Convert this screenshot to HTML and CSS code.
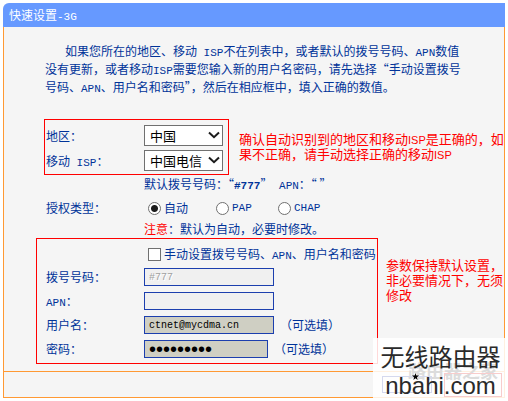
FILE: index.html
```html
<!DOCTYPE html>
<html lang="zh-CN">
<head>
    <meta charset="utf-8">
    <title>快速设置-3G</title>
    <link rel="stylesheet" href="styles.css">
</head>
<body>
    <form class="panel">
        <h1 class="panel-title">快速设置<span class="en">-3G</span></h1>

        <div class="content">
            <p class="intro">如果您所在的地区、移动<span class="en"> ISP</span>不在列表中，或者默认的拨号号码、<span class="en">APN</span>数值没有更新，或者移动<span class="en">ISP</span>需要您输入新的用户名密码，请先选择“手动设置拨号号码、<span class="en">APN</span>、用户名和密码”，然后在相应框中，填入正确的数值。</p>

            <div class="section">
                <div class="group group-isp">
                    <div class="row">
                        <label class="label" for="region">地区：</label>
                        <div class="select">
                            <select id="region"><option>中国</option></select>
                            <svg class="arrow" viewBox="0 0 12 8"><path d="M1 1.5L6 6.2L11 1.5"/></svg>
                        </div>
                    </div>
                    <div class="row">
                        <label class="label" for="isp">移动<span class="en"> ISP</span>：</label>
                        <div class="select">
                            <select id="isp"><option>中国电信</option></select>
                            <svg class="arrow" viewBox="0 0 12 8"><path d="M1 1.5L6 6.2L11 1.5"/></svg>
                        </div>
                    </div>
                </div>
                <p class="note">确认自动识别到的地区和移动<span class="isp">ISP</span>是正确的，如<br>果不正确，请手动选择正确的移动<span class="isp">ISP</span></p>
            </div>

            <div class="plain">
                <div class="hint">默认拨号号码：“<b class="en">#777</b>”<span class="en"> APN</span>：“ ”</div>
                <div class="row auth">
                    <span class="label">授权类型：</span>
                    <label class="radio"><input type="radio" name="auth" checked>自动</label>
                    <label class="radio"><input type="radio" name="auth"><span class="en">PAP</span></label>
                    <label class="radio"><input type="radio" name="auth"><span class="en">CHAP</span></label>
                </div>
                <div class="hint"><span class="warn">注意</span>：默认为自动，必要时修改。</div>
            </div>

            <div class="section">
                <div class="group group-account">
                    <label class="manual"><input type="checkbox"><span>手动设置拨号号码、<span class="en">APN</span>、用户名和密码</span></label>
                    <div class="row">
                        <label class="label" for="dial">拨号号码：</label>
                        <input class="text" id="dial" type="text" value="#777" disabled>
                    </div>
                    <div class="row">
                        <label class="label" for="apn"><span class="en">APN</span>：</label>
                        <input class="text" id="apn" type="text" disabled>
                    </div>
                    <div class="row">
                        <label class="label" for="user">用户名：</label>
                        <input class="text filled" id="user" type="text" value="ctnet@mycdma.cn">
                        <span class="optional">（可选填）</span>
                    </div>
                    <div class="row">
                        <label class="label" for="password">密码：</label>
                        <input class="text filled short" id="password" type="password" value="vnet.mobi">
                        <span class="optional">（可选填）</span>
                    </div>
                </div>
                <p class="note">参数保持默认设置，<br>非必要情况下，无须<br>修改</p>
            </div>
        </div>

        <div class="footer"></div>
    </form>

    <div class="watermark">
        <div class="ghost">路由器之家</div>
        <div class="ghost-button"></div>
        <div class="ghost-mark"></div>
        <div class="brand">无线路由器</div>
        <div class="site">nbahi.com</div>
        <svg class="star" viewBox="0 0 10 10"><path d="M5 0L6.2 3.4L10 3.6L7 5.9L8 10L5 7.6L2 10L3 5.9L0 3.6L3.8 3.4Z"/></svg>
    </div>
</body>
</html>
```
FILE: styles.css
```css
* {
    box-sizing: border-box;
}

body {
    margin: 0;
    padding: 3px;
    background: #fff;
    color: #003399;
    font: 12px/18px "Noto Sans CJK SC", sans-serif;
}

p, h1 {
    margin: 0;
}

.en {
    font-family: "Liberation Mono", monospace;
    font-size: 11px;
    line-height: 1;
    white-space: pre-wrap;
}

.panel {
    background: #f5f5f5;
    border-radius: 6px 0 0 0;
}

.panel-title {
    padding-left: 6px;
    background: #6699ff;
    border-radius: 6px 0 0 0;
    color: #fff;
    font-size: 12px;
    font-weight: normal;
    line-height: 24px;
}

.content {
    padding: 15px 0 7px 32px;
    border: solid #ff9933;
    border-width: 0 1px;
}

.intro {
    margin: 0 40px 23px 9px;
    text-indent: 20px;
}

.section {
    display: flex;
}

.group {
    display: flex;
    flex-direction: column;
    flex: none;
    border: 1px solid #ff0000;
}

.group-isp {
    gap: 4px;
    margin: 0 10px 0 8px;
    padding: 5px 5px 3px 1px;
}

.group-account {
    gap: 6px;
    width: 342px;
    margin-right: 8px;
    padding: 7px 0 5px 9px;
}

.row {
    display: flex;
    align-items: center;
}

.label {
    flex: none;
    width: 98px;
}

.select {
    position: relative;
}

.select select {
    display: block;
    width: 79px;
    height: 21px;
    padding: 0 5px;
    appearance: none;
    background: #fff;
    border: 1px solid #707070;
    border-radius: 0;
    color: #000;
    font: 13px/18px "Noto Sans CJK SC", sans-serif;
}

.arrow {
    position: absolute;
    top: 6px;
    right: 3px;
    width: 12px;
    height: 8px;
    fill: none;
    stroke: #1b1b1b;
    stroke-width: 2;
}

.note {
    padding-top: 12px;
    color: #ff0000;
    font-size: 13px;
    line-height: 15px;
    white-space: nowrap;
}

.group-account + .note {
    padding-top: 19px;
}

.isp {
    font-family: "Liberation Sans", sans-serif;
    font-size: 11px;
    line-height: 1;
}

.plain {
    padding-left: 10px;
}

.hint {
    padding-left: 98px;
}

.auth {
    height: 20px;
    margin: 5px 0 2px;
}

.radio {
    display: flex;
    align-items: center;
    gap: 3px;
    width: 68px;
    padding-left: 4px;
}

.auth .radio:last-child {
    margin-left: -6px;
}

input[type="radio"],
input[type="checkbox"] {
    flex: none;
    appearance: none;
    width: 13px;
    height: 13px;
    margin: 0;
    background: #fff;
    border: 1px solid #707070;
}

input[type="radio"] {
    border-radius: 50%;
}

input[type="radio"]:checked {
    background: radial-gradient(circle, #1b1b1b 3px, #fff 4px);
}

.warn {
    color: #ff0000;
}

.manual {
    display: flex;
    align-items: center;
    gap: 3px;
    height: 16px;
    padding-left: 102px;
    white-space: nowrap;
}

.row .text {
    width: 130px;
    height: 18px;
    padding: 0 4px;
    background: #f0f0f0;
    border: 1px solid #1c3fae;
    color: #000;
    font: 10px "Liberation Mono", monospace;
}

.row .text:disabled {
    color: #a0a0a0;
    text-shadow: 1px 1px #fff;
}

.row .filled {
    background: #cfcfc3;
}

.row .short {
    width: 124px;
    font: 20px "Liberation Sans", sans-serif;
}

.optional {
    padding-left: 6px;
    line-height: 18px;
}

.footer {
    height: 27px;
    border: 1px solid #ff9933;
}

.watermark {
    position: absolute;
    right: 0;
    top: 338px;
    width: 135px;
    height: 60px;
    background: rgba(255, 255, 255, 0.85);
    color: #2a2a2a;
    text-align: center;
    white-space: nowrap;
}

.brand,
.site {
    position: relative;
}

.brand {
    font: 24px/36px "Noto Sans CJK SC", sans-serif;
}

.site {
    font: 24px/24px "Liberation Sans", sans-serif;
}

.ghost {
    position: absolute;
    top: 22px;
    left: 35px;
    color: #dcdcdc;
    font: bold 18px/20px "Noto Sans CJK SC", sans-serif;
}

.ghost-button,
.ghost-mark {
    position: absolute;
    border: 1px solid #d5d9ee;
}

.ghost-button {
    top: 38px;
    left: 9px;
    width: 50px;
    height: 17px;
}

.ghost-mark {
    top: 35px;
    left: 71px;
    width: 58px;
    height: 24px;
    border-color: #f8cccc;
}

.star {
    position: absolute;
    top: 35px;
    left: 39px;
    width: 7px;
    height: 7px;
}
```
